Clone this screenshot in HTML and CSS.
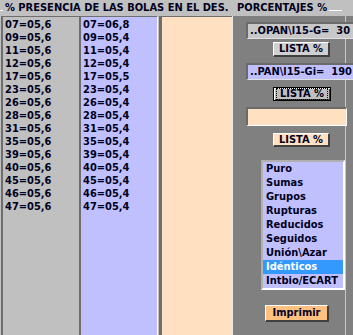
FILE: index.html
```html
<!DOCTYPE html>
<html lang="es">
<head>
    <meta charset="UTF-8">
    <meta name="viewport" content="width=device-width, initial-scale=1.0">
    <title>Presencia de las bolas</title>
    <link rel="stylesheet" href="styles.css">
</head>
<body>
    <div id="form">
        <div class="top-bar">
            <div class="cap-left">
                <span class="rule rule-left"></span>
                <span class="caption">% PRESENCIA DE LAS BOLAS EN EL DES.</span>
            </div>
            <div class="cap-right">
                <span class="caption">PORCENTAJES %</span>
                <span class="rule rule-right"></span>
            </div>
        </div>

        <div class="main">
            <div class="list list-gray">
                <div class="row">07=05,6</div>
                <div class="row">09=05,6</div>
                <div class="row">11=05,6</div>
                <div class="row">12=05,6</div>
                <div class="row">17=05,6</div>
                <div class="row">23=05,6</div>
                <div class="row">26=05,6</div>
                <div class="row">28=05,6</div>
                <div class="row">31=05,6</div>
                <div class="row">35=05,6</div>
                <div class="row">39=05,6</div>
                <div class="row">40=05,6</div>
                <div class="row">45=05,6</div>
                <div class="row">46=05,6</div>
                <div class="row">47=05,6</div>
            </div>
            <div class="list list-blue">
                <div class="row">07=06,8</div>
                <div class="row">09=05,4</div>
                <div class="row">11=05,4</div>
                <div class="row">12=05,4</div>
                <div class="row">17=05,5</div>
                <div class="row">23=05,4</div>
                <div class="row">26=05,4</div>
                <div class="row">28=05,4</div>
                <div class="row">31=05,4</div>
                <div class="row">35=05,4</div>
                <div class="row">39=05,4</div>
                <div class="row">40=05,4</div>
                <div class="row">45=05,4</div>
                <div class="row">46=05,4</div>
                <div class="row">47=05,4</div>
            </div>
            <div class="list list-peach"></div>

            <div class="panel">
                <div class="textbox tb-gray">..OPAN\l15-G=  30</div>
                <div class="btn btn-gray">LISTA %</div>
                <div class="textbox tb-blue">..PAN\l15-Gi=  190</div>
                <div class="btn btn-focus"><span class="focus-ring">LISTA %</span></div>
                <div class="textbox tb-peach"></div>
                <div class="btn btn-peach">LISTA %</div>
                <div class="listbox">
                    <div class="item">Puro</div>
                    <div class="item">Sumas</div>
                    <div class="item">Grupos</div>
                    <div class="item">Rupturas</div>
                    <div class="item">Reducidos</div>
                    <div class="item">Seguidos</div>
                    <div class="item">Unión\Azar</div>
                    <div class="item selected">Idénticos</div>
                    <div class="item">Intbio/ECART</div>
                </div>
                <div class="btn btn-print">Imprimir</div>
            </div>
        </div>
    </div>
</body>
</html>
```

FILE: styles.css
```css
body {
    margin: 0;
    width: 353px;
    height: 335px;
    overflow: hidden;
    background-color: #c0c0c0;
    font-family: "DejaVu Sans Condensed", "DejaVu Sans", sans-serif;
    font-stretch: condensed;
    font-weight: bold;
    font-size: 11px;
    color: #000020;
}
#form {
    display: flex;
    flex-direction: column;
    height: 335px;
}
.top-bar {
    display: flex;
    height: 16px;
    align-items: center;
    background-color: #c0c0c0;
}
.cap-left {
    display: flex;
    align-items: center;
    width: 232px;
}
.cap-right {
    display: flex;
    align-items: center;
    padding-left: 5px;
}
.caption {
    line-height: 16px;
    white-space: nowrap;
}
.rule {
    height: 1px;
    background-color: #ffffff;
    margin-top: 4px;
}
.rule-left {
    width: 3px;
    margin-right: 2px;
}
.rule-right {
    width: 13px;
    margin-left: 2px;
}
.main {
    display: flex;
    flex: 1;
}
.list {
    border-top: 1px solid #6e6e6e;
    padding-top: 1px;
    box-sizing: border-box;
}
.list-gray {
    width: 78px;
    margin-left: 1px;
    border-left: 2px solid #6e6e6e;
    background-color: #c0c0c0;
    padding-left: 2px;
}
.list-blue {
    width: 79px;
    border-left: 2px solid #6e6e6e;
    border-right: 1px solid #ffffff;
    background-color: #c0c0ff;
    padding-left: 2px;
}
.list-peach {
    width: 73px;
    margin-left: 1px;
    border-left: 3px solid #6e6e6e;
    background-color: #ffe0c0;
}
.row {
    line-height: 13px;
    white-space: nowrap;
}
.panel {
    flex: 1;
    display: flex;
    flex-direction: column;
    align-items: flex-start;
    overflow: hidden;
    border-left: 1px solid #e8e8e8;
    background: linear-gradient(to right, transparent 112px, #c8c8c8 112px, #c8c8c8 113px, transparent 113px), #808080;
}
.textbox {
    box-sizing: border-box;
    height: 17px;
    width: 120px;
    flex-shrink: 0;
    margin-left: 13px;
    padding-left: 2px;
    line-height: 13px;
    white-space: pre;
    overflow: hidden;
    border-top: 2px solid #6a6a6a;
    border-left: 2px solid #6a6a6a;
    border-bottom: 1px solid #e0e0e0;
    border-right: 1px solid #e0e0e0;
}
.tb-gray {
    margin-top: 6px;
    background-color: #c8c8c8;
}
.tb-blue {
    margin-top: 6px;
    background-color: #c0c0ff;
}
.tb-peach {
    margin-top: 6px;
    width: 101px;
    height: 19px;
    background-color: #ffe0c0;
    border-bottom: 1px solid #ffffff;
    border-right: 1px solid #ffffff;
}
.btn {
    box-sizing: border-box;
    width: 57px;
    height: 15px;
    margin-left: 40px;
    text-align: center;
    line-height: 12px;
    border-top: 1px solid #ffffff;
    border-left: 1px solid #ffffff;
    border-bottom: 2px solid #404040;
    border-right: 2px solid #404040;
}
.btn-gray {
    margin-top: 3px;
    background-color: #d0d0d0;
}
.btn-focus {
    margin-top: 7px;
    width: 58px;
    height: 14px;
    background-color: #c0c0c0;
    border: 1px solid #000000;
    box-shadow: inset 1px 1px 0 #ffffff, inset -1px -1px 0 #404040;
    line-height: 12px;
    padding: 0 2px;
}
.focus-ring {
    display: block;
    outline: 1px dotted #000000;
    outline-offset: -1px;
}
.btn-peach {
    margin-top: 7px;
    height: 14px;
    line-height: 11px;
    background-color: #ffe0c0;
}
.listbox {
    box-sizing: border-box;
    width: 84px;
    height: 130px;
    margin-top: 13px;
    margin-left: 28px;
    background-color: #c0c0ff;
    border-top: 2px solid #b0b0b0;
    border-left: 2px solid #b0b0b0;
    border-bottom: 2px solid #ffffff;
    border-right: 2px solid #ffffff;
}
.item {
    line-height: 14px;
    padding-left: 3px;
    white-space: nowrap;
}
.item.selected {
    background-color: #3399ff;
    color: #ffffff;
}
.btn-print {
    margin-top: 15px;
    margin-left: 32px;
    width: 64px;
    height: 17px;
    line-height: 14px;
    background-color: #ffc080;
}
```
